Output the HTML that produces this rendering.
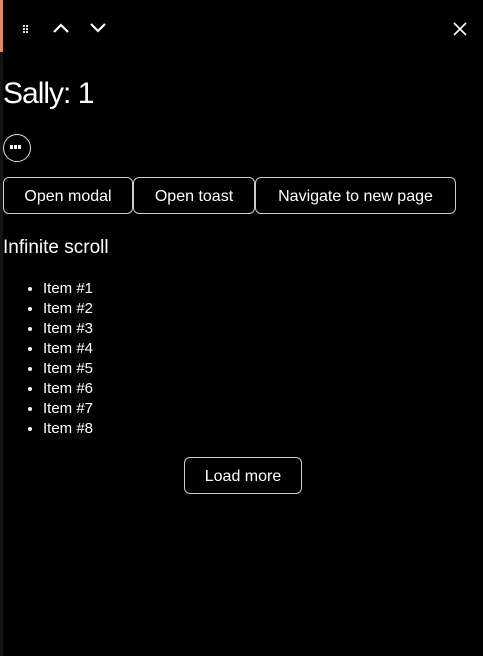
<!DOCTYPE html>
<html><head><style>
html,body{margin:0;padding:0;background:#000;width:483px;height:656px;overflow:hidden;color:#fff;font-family:"Liberation Sans",sans-serif;position:relative}
.strip{position:absolute;left:0;top:0;width:3px;height:52px;background:#d98a7a}
.strip2{position:absolute;left:0;top:52px;width:3px;height:604px;background:#141414}
.abs{position:absolute}
.btn{position:absolute;top:177px;height:37px;box-sizing:border-box;border:1px solid #ccc;border-radius:6px;font-size:16px;display:flex;align-items:center;justify-content:center;color:#fff;padding-top:3px}
ul{position:absolute;left:0;top:279px;margin:0;padding-left:43px;font-size:15px;line-height:20px}
li{margin:0}
</style></head><body>
<div class="strip"></div><div class="strip2"></div>
<svg class="abs" style="left:22px;top:24px" width="8" height="9"><g fill="#ddd"><rect x="1" y="1" width="2" height="2"/><rect x="4" y="1" width="2" height="2"/><rect x="1" y="4" width="2" height="2"/><rect x="4" y="4" width="2" height="2"/><rect x="1" y="7" width="2" height="2"/><rect x="4" y="7" width="2" height="2"/></g></svg>
<svg class="abs" style="left:52px;top:21px" width="18" height="14"><path d="M2 11 L9 4 L16 11" stroke="#fff" stroke-width="2.2" fill="none"/></svg>
<svg class="abs" style="left:89px;top:21px" width="18" height="14"><path d="M2 3 L9 10 L16 3" stroke="#fff" stroke-width="2.2" fill="none"/></svg>
<svg class="abs" style="left:452px;top:21px" width="16" height="16"><path d="M2 2 L14 14 M14 2 L2 14" stroke="#fff" stroke-width="1.6" fill="none"/></svg>
<div class="abs" style="left:3px;top:74px;font-size:30px;line-height:40px;letter-spacing:-1px">Sally: 1</div>
<div class="abs" style="left:3px;top:134px;width:26px;height:26px;border:1px solid #ddd;border-radius:50%"></div>
<svg class="abs" style="left:10px;top:145px" width="14" height="5"><g fill="#fff"><rect x="0" y="0" width="3" height="4"/><rect x="4" y="0" width="3" height="4"/><rect x="8" y="0" width="3" height="4"/></g></svg>
<div class="btn" style="left:3px;width:130px">Open modal</div>
<div class="btn" style="left:133px;width:122px">Open toast</div>
<div class="btn" style="left:255px;width:201px">Navigate to new page</div>
<div class="abs" style="left:3px;top:236px;font-size:19px;line-height:24px">Infinite scroll</div>
<ul><li>Item #1</li><li>Item #2</li><li>Item #3</li><li>Item #4</li><li>Item #5</li><li>Item #6</li><li>Item #7</li><li>Item #8</li></ul>
<div class="btn" style="left:184px;top:457px;width:118px">Load more</div>
</body></html>
